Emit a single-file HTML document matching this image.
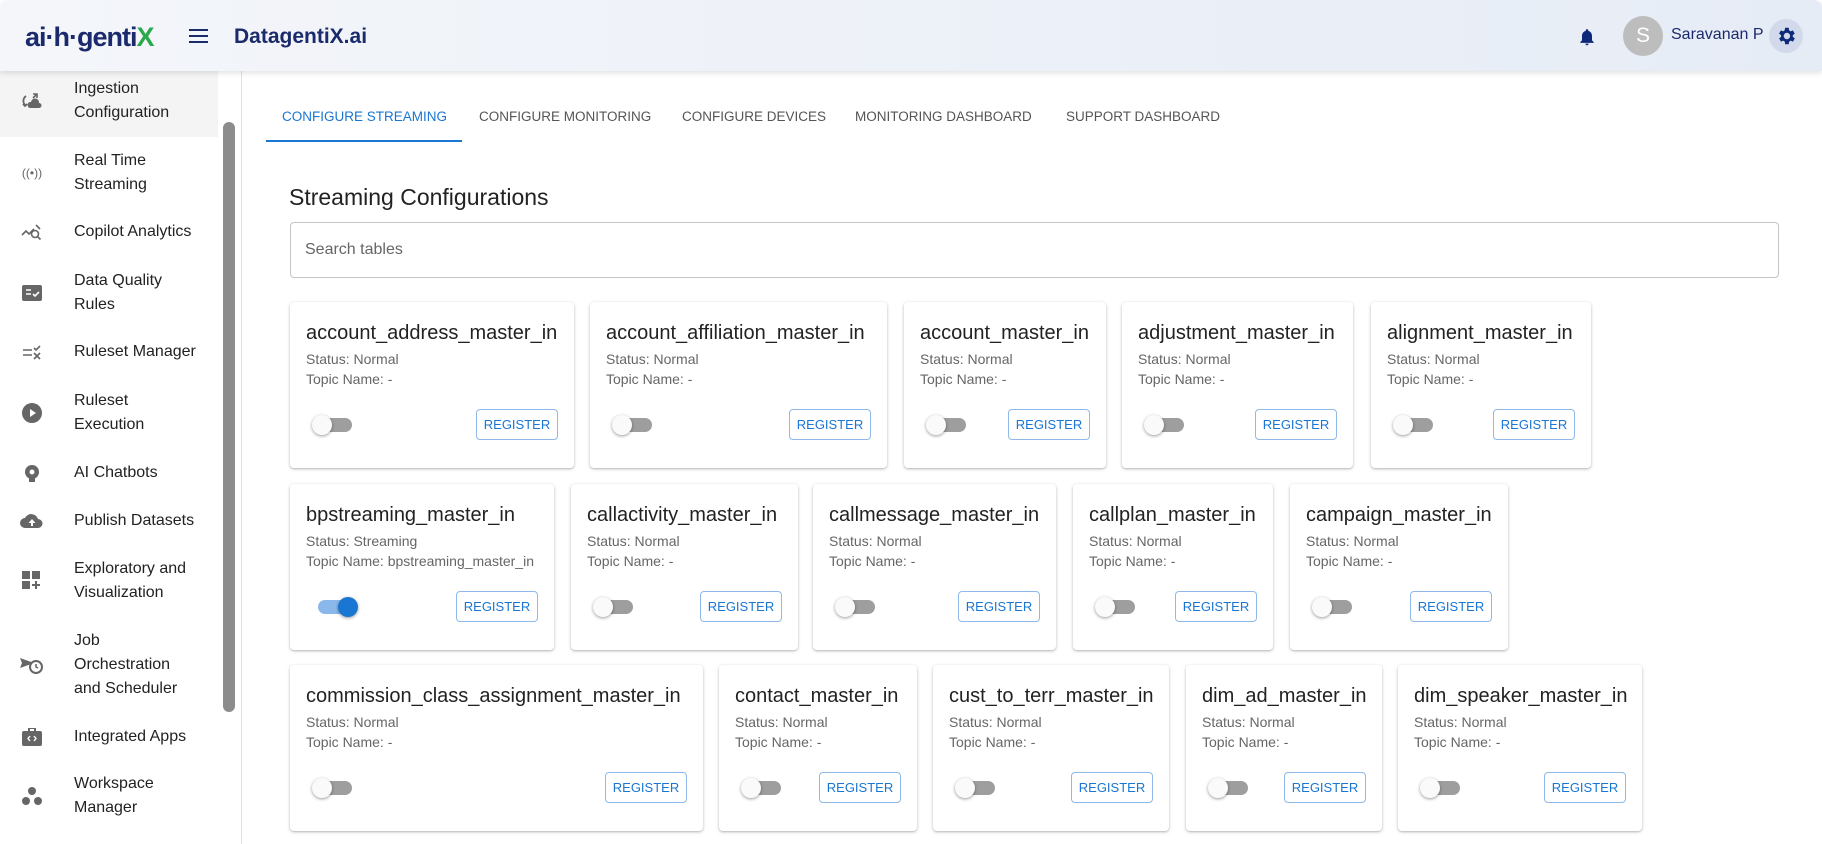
<!DOCTYPE html>
<html><head><meta charset="utf-8"><style>
*{box-sizing:border-box;margin:0;padding:0}
body{width:1822px;height:844px;overflow:hidden;background:#fff;font-family:"Liberation Sans",Arial,sans-serif;position:relative;color:#222}
.hdr{position:absolute;left:0;top:0;width:1822px;height:71px;background:linear-gradient(90deg,#f4f6fa,#e6ecf6);box-shadow:0 2px 6px rgba(0,0,0,.12);z-index:3;border-radius:8px 8px 0 0}
.logo{position:absolute;left:25px;top:22px;font-size:27px;font-weight:bold;color:#1a2a6c;letter-spacing:-1px}
.ham{position:absolute;left:189px;top:29px;width:19px;height:14px;border-top:2.5px solid #1a2a6c;border-bottom:2.5px solid #1a2a6c}
.ham:after{content:"";position:absolute;left:0;top:3.5px;width:19px;height:2.5px;background:#1a2a6c}
.brand{position:absolute;left:234px;top:25px;font-size:21px;font-weight:bold;color:#1a2a6c}
.side{position:absolute;left:0;top:71px;width:242px;height:773px;border-right:1px solid #e0e0e0;background:#fff}
.it{position:absolute;left:0;width:218px;height:80px;display:flex;align-items:center}
.it .ic{margin-left:20px;width:24px;display:flex;align-items:center;justify-content:center;color:#666}
.it .tx{margin-left:30px;font-size:16px;line-height:24px;color:#222}
.sb{position:absolute;left:223px;top:51px;width:12px;height:590px;background:#8c8c8c;border-radius:6px}
.tab{position:absolute;top:109px;font-size:13.5px;color:#555}
.card{position:absolute;height:166px;background:#fff;border-radius:4px;box-shadow:0 1px 3px rgba(0,0,0,.25),0 1px 1px rgba(0,0,0,.08)}
.card .t{position:absolute;left:16px;top:19px;font-size:20px;line-height:24px;white-space:nowrap;color:#222}
.card .s1,.card .s2{position:absolute;left:16px;font-size:14px;color:#666;white-space:nowrap}
.card .s1{top:49px}.card .s2{top:69px}
.tg{position:absolute;left:28px;top:116px;width:34px;height:14px;border-radius:7px;background:#9e9e9e}
.tg:after{content:"";position:absolute;left:-6px;top:-3px;width:20px;height:20px;border-radius:50%;background:#fafafa;box-shadow:0 1px 3px rgba(0,0,0,.4)}
.tg.on{background:#8bb8ea}.tg.on:after{left:20px;background:#1976d2}
.btn{position:absolute;right:16px;top:107px;width:82px;height:31px;border:1px solid #8fb9e8;border-radius:4px;color:#1976d2;font-size:13px;text-align:center;line-height:29px}
</style></head><body>
<div class="hdr">
<div class="logo">ai·h·genti<span style="color:#2ba84a">X</span></div>
<div class="ham"></div>
<div class="brand">DatagentiX.ai</div>
<svg style="position:absolute;left:1577px;top:26px" width="20" height="22" viewBox="0 0 24 24"><path fill="#0d2a7a" d="M12 22c1.1 0 2-.9 2-2h-4c0 1.1.9 2 2 2zm6-6v-5c0-3.1-1.6-5.6-4.5-6.3V4c0-.8-.7-1.5-1.5-1.5s-1.5.7-1.5 1.5v.7C7.6 5.4 6 7.9 6 11v5l-2 2v1h16v-1l-2-2z"/></svg>
<div style="position:absolute;left:1623px;top:16px;width:40px;height:40px;border-radius:50%;background:#bdbdbd;color:#fff;font-size:21px;text-align:center;line-height:40px">S</div>
<div style="position:absolute;left:1671px;top:26px;font-size:16px;color:#1a2a6c">Saravanan P</div>
<div style="position:absolute;left:1769px;top:19px;width:34px;height:34px;border-radius:50%;background:#d2d9ea"></div>
<svg style="position:absolute;left:1775px;top:25px" width="22" height="22" viewBox="0 0 24 24"><path fill="#0d2a7a" d="M19.4 13a7.5 7.5 0 0 0 0-2l2.1-1.6-2-3.5-2.5 1a7 7 0 0 0-1.7-1L15 3h-4l-.4 2.9a7 7 0 0 0-1.7 1l-2.5-1-2 3.5L6.6 11a7.5 7.5 0 0 0 0 2l-2.1 1.6 2 3.5 2.5-1a7 7 0 0 0 1.7 1L11 21h4l.4-2.9a7 7 0 0 0 1.7-1l2.5 1 2-3.5L19.4 13zM13 15.5a3.5 3.5 0 1 1 0-7 3.5 3.5 0 0 1 0 7z"/></svg>
</div>
<div class="side">
<div style="position:absolute;left:0;top:0;width:218px;height:66px;background:#f4f4f4"></div>
<div class="sb"></div>
</div>
<div class="it" style="top:61px"><span class="ic"><svg width="22" height="18"><path d="M5 4a6 6 0 0 0-1 9M2 12l2 2 2-2" stroke="#666" stroke-width="1.8" fill="none"/><path d="M9 16a3 3 0 0 1 1-6 4 4 0 0 1 8 1 2.5 2.5 0 0 1 0 5z" fill="#666"/><path d="M12 2h4v4M16 2l-4 4" stroke="#666" stroke-width="1.6" fill="none"/></svg></span><span class="tx">Ingestion<br>Configuration</span></div>
<div class="it" style="top:133px"><span class="ic" style="font-size:12px">((•))</span><span class="tx">Real Time<br>Streaming</span></div>
<div class="it" style="top:192px"><span class="ic"><svg width="22" height="18"><path d="M1 12l4-4 3 3 5-5" stroke="#666" stroke-width="1.6" fill="none"/><circle cx="14" cy="11" r="3.5" stroke="#666" stroke-width="1.6" fill="none"/><path d="M16.5 13.5l3 3M15 2l4 4" stroke="#666" stroke-width="1.6"/></svg></span><span class="tx">Copilot Analytics</span></div>
<div class="it" style="top:253px"><span class="ic"><svg width="20" height="16"><rect width="20" height="16" rx="2" fill="#666"/><path d="M4 5h5M4 9h5M11 9l2 2 4-4" stroke="#fff" stroke-width="1.6" fill="none"/></svg></span><span class="tx">Data Quality<br>Rules</span></div>
<div class="it" style="top:312px"><span class="ic"><svg width="20" height="16"><path d="M1 6h9M1 11h9" stroke="#666" stroke-width="1.6"/><path d="M12 4l2 2 4-4M12 9l6 6M18 9l-6 6" stroke="#666" stroke-width="1.6" fill="none"/></svg></span><span class="tx">Ruleset Manager</span></div>
<div class="it" style="top:373px"><span class="ic"><svg width="20" height="20"><circle cx="10" cy="10" r="10" fill="#666"/><path d="M8 6l6 4-6 4z" fill="#fff"/></svg></span><span class="tx">Ruleset<br>Execution</span></div>
<div class="it" style="top:433px"><span class="ic"><svg width="20" height="20"><circle cx="10" cy="9" r="7" fill="#666"/><rect x="7" y="14" width="6" height="5" fill="#666"/><circle cx="10" cy="9" r="2.5" fill="#fff"/></svg></span><span class="tx">AI Chatbots</span></div>
<div class="it" style="top:481px"><span class="ic"><svg width="24" height="18"><path d="M5 16a5 5 0 0 1 0-10 7 7 0 0 1 13 1 4.5 4.5 0 0 1 0 9z" fill="#666"/><path d="M12 7l-3.5 4h2.5v3h2v-3h2.5z" fill="#fff"/></svg></span><span class="tx">Publish Datasets</span></div>
<div class="it" style="top:541px"><span class="ic"><svg width="20" height="20" fill="#666"><rect width="8" height="8"/><rect x="10" width="8" height="8"/><rect y="10" width="8" height="8"/><path d="M13 10h2v3h3v2h-3v3h-2v-3h-3v-2h3z"/></svg></span><span class="tx">Exploratory and<br>Visualization</span></div>
<div class="it" style="top:625px"><span class="ic"><svg width="24" height="20"><path d="M0 3l14 5-14 5 2-5z" fill="#666"/><circle cx="16" cy="12" r="6" fill="#fff" stroke="#666" stroke-width="2"/><path d="M16 9v3l2 1" stroke="#666" stroke-width="1.5" fill="none"/></svg></span><span class="tx">Job<br>Orchestration<br>and Scheduler</span></div>
<div class="it" style="top:697px"><span class="ic"><svg width="20" height="18"><rect y="3" width="20" height="15" rx="2" fill="#666"/><rect x="7" y="0" width="6" height="4" fill="none" stroke="#666" stroke-width="2"/><path d="M8 8l-2 2.5 2 2.5M12 8l2 2.5-2 2.5" stroke="#fff" stroke-width="1.4" fill="none"/></svg></span><span class="tx">Integrated Apps</span></div>
<div class="it" style="top:756px"><span class="ic"><svg width="22" height="20" fill="#666"><circle cx="11" cy="5" r="4"/><circle cx="5" cy="15" r="4"/><circle cx="17" cy="15" r="4"/></svg></span><span class="tx">Workspace<br>Manager</span></div>
<!-- tabs -->
<div class="tab" style="left:282px;color:#1976d2">CONFIGURE STREAMING</div>
<div class="tab" style="left:479px">CONFIGURE MONITORING</div>
<div class="tab" style="left:682px">CONFIGURE DEVICES</div>
<div class="tab" style="left:855px">MONITORING DASHBOARD</div>
<div class="tab" style="left:1066px">SUPPORT DASHBOARD</div>
<div style="position:absolute;left:266px;top:140px;width:196px;height:2px;background:#1976d2"></div>
<div style="position:absolute;left:289px;top:184px;font-size:23px;color:#222">Streaming Configurations</div>
<div style="position:absolute;left:290px;top:222px;width:1489px;height:56px;border:1px solid #c4c4c4;border-radius:4px;font-size:16px;color:#666;padding:18px 0 0 14px">Search tables</div>
<!-- cards -->
<div class="card" style="left:290px;top:302px;width:284px"><div class="t">account_address_master_in</div><div class="s1">Status: Normal</div><div class="s2">Topic Name: -</div><span class="tg"></span><span class="btn">REGISTER</span></div>
<div class="card" style="left:590px;top:302px;width:297px"><div class="t">account_affiliation_master_in</div><div class="s1">Status: Normal</div><div class="s2">Topic Name: -</div><span class="tg"></span><span class="btn">REGISTER</span></div>
<div class="card" style="left:904px;top:302px;width:202px"><div class="t">account_master_in</div><div class="s1">Status: Normal</div><div class="s2">Topic Name: -</div><span class="tg"></span><span class="btn">REGISTER</span></div>
<div class="card" style="left:1122px;top:302px;width:231px"><div class="t">adjustment_master_in</div><div class="s1">Status: Normal</div><div class="s2">Topic Name: -</div><span class="tg"></span><span class="btn">REGISTER</span></div>
<div class="card" style="left:1371px;top:302px;width:220px"><div class="t">alignment_master_in</div><div class="s1">Status: Normal</div><div class="s2">Topic Name: -</div><span class="tg"></span><span class="btn">REGISTER</span></div>

<div class="card" style="left:290px;top:484px;width:264px"><div class="t">bpstreaming_master_in</div><div class="s1">Status: Streaming</div><div class="s2">Topic Name: bpstreaming_master_in</div><span class="tg on"></span><span class="btn">REGISTER</span></div>
<div class="card" style="left:571px;top:484px;width:227px"><div class="t">callactivity_master_in</div><div class="s1">Status: Normal</div><div class="s2">Topic Name: -</div><span class="tg"></span><span class="btn">REGISTER</span></div>
<div class="card" style="left:813px;top:484px;width:243px"><div class="t">callmessage_master_in</div><div class="s1">Status: Normal</div><div class="s2">Topic Name: -</div><span class="tg"></span><span class="btn">REGISTER</span></div>
<div class="card" style="left:1073px;top:484px;width:200px"><div class="t">callplan_master_in</div><div class="s1">Status: Normal</div><div class="s2">Topic Name: -</div><span class="tg"></span><span class="btn">REGISTER</span></div>
<div class="card" style="left:1290px;top:484px;width:218px"><div class="t">campaign_master_in</div><div class="s1">Status: Normal</div><div class="s2">Topic Name: -</div><span class="tg"></span><span class="btn">REGISTER</span></div>

<div class="card" style="left:290px;top:665px;width:413px"><div class="t">commission_class_assignment_master_in</div><div class="s1">Status: Normal</div><div class="s2">Topic Name: -</div><span class="tg"></span><span class="btn">REGISTER</span></div>
<div class="card" style="left:719px;top:665px;width:198px"><div class="t">contact_master_in</div><div class="s1">Status: Normal</div><div class="s2">Topic Name: -</div><span class="tg"></span><span class="btn">REGISTER</span></div>
<div class="card" style="left:933px;top:665px;width:236px"><div class="t">cust_to_terr_master_in</div><div class="s1">Status: Normal</div><div class="s2">Topic Name: -</div><span class="tg"></span><span class="btn">REGISTER</span></div>
<div class="card" style="left:1186px;top:665px;width:196px"><div class="t">dim_ad_master_in</div><div class="s1">Status: Normal</div><div class="s2">Topic Name: -</div><span class="tg"></span><span class="btn">REGISTER</span></div>
<div class="card" style="left:1398px;top:665px;width:244px"><div class="t">dim_speaker_master_in</div><div class="s1">Status: Normal</div><div class="s2">Topic Name: -</div><span class="tg"></span><span class="btn">REGISTER</span></div>
</body></html>
